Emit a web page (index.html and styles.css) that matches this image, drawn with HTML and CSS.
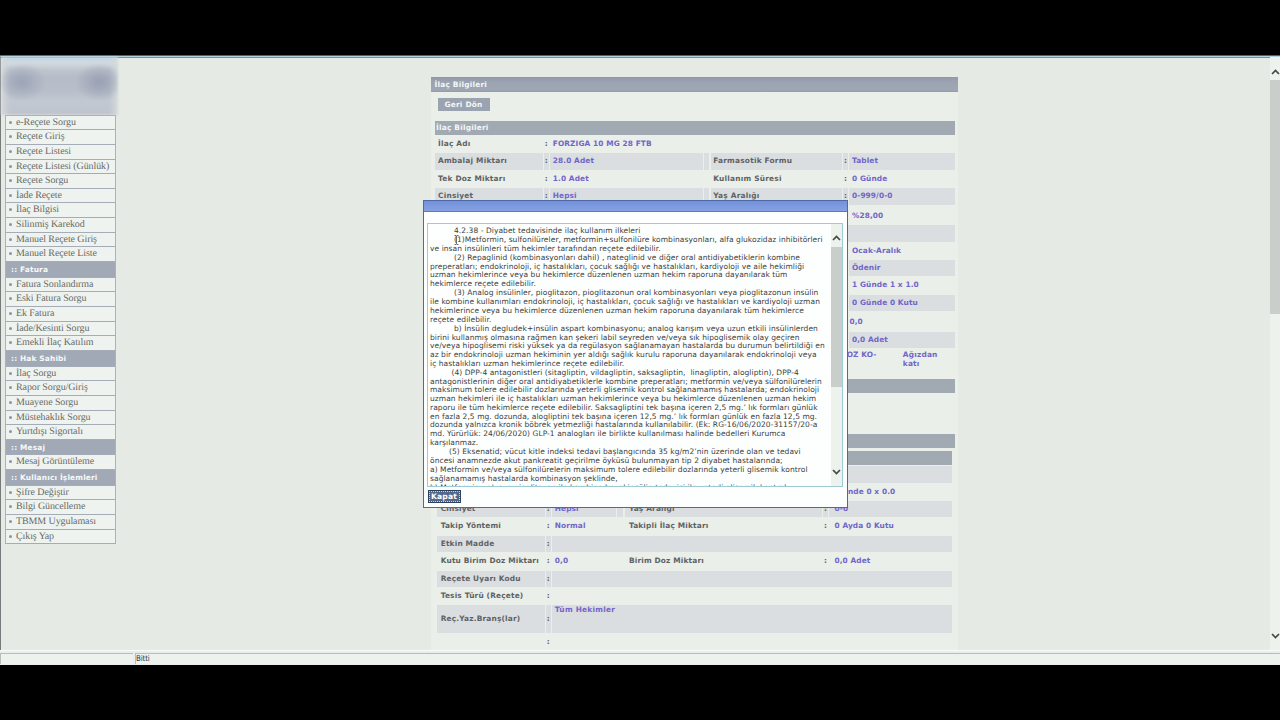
FILE: index.html
```html
<!DOCTYPE html>
<html lang="tr">
<head>
  <meta charset="UTF-8">
  <title>İlaç Bilgileri</title>
  <link rel="stylesheet" href="styles.css">
</head>
<body>

  <div class="window">
    <div class="main">
      <div class="sidebar">
        <div class="logo"></div>
        <ul class="menu">
          <li>e-Reçete Sorgu</li>
          <li>Reçete Giriş</li>
          <li>Reçete Listesi</li>
          <li>Reçete Listesi (Günlük)</li>
          <li>Reçete Sorgu</li>
          <li>İade Reçete</li>
          <li>İlaç Bilgisi</li>
          <li>Silinmiş Karekod</li>
          <li>Manuel Reçete Giriş</li>
          <li>Manuel Reçete Liste</li>
          <li class="head">:: Fatura</li>
          <li>Fatura Sonlandırma</li>
          <li>Eski Fatura Sorgu</li>
          <li>Ek Fatura</li>
          <li>İade/Kesinti Sorgu</li>
          <li>Emekli İlaç Katılım</li>
          <li class="head">:: Hak Sahibi</li>
          <li>İlaç Sorgu</li>
          <li>Rapor Sorgu/Giriş</li>
          <li>Muayene Sorgu</li>
          <li>Müstehaklık Sorgu</li>
          <li>Yurtdışı Sigortalı</li>
          <li class="head">:: Mesaj</li>
          <li>Mesaj Görüntüleme</li>
          <li class="head">:: Kullanıcı İşlemleri</li>
          <li>Şifre Değiştir</li>
          <li>Bilgi Güncelleme</li>
          <li>TBMM Uygulaması</li>
          <li>Çıkış Yap</li>
        </ul>
      </div>

      <div class="content">
        <div class="panel">
          <div class="panel-title">İlaç Bilgileri</div>
          <div class="toolbar"><span class="btn">Geri Dön</span></div>

          <div class="section-title">İlaç Bilgileri</div>
          <div class="info">
            <div class="row"><b>İlaç Adı</b><i>:</i><span>FORZIGA 10 MG 28 FTB</span></div>
            <div class="row odd pair"><b>Ambalaj Miktarı</b><i>:</i><span>28.0 Adet</span><b>Farmasotik Formu</b><i>:</i><span>Tablet</span></div>
            <div class="row"><b>Tek Doz Miktarı</b><i>:</i><span>1.0 Adet</span><b>Kullanım Süresi</b><i>:</i><span>0 Günde</span></div>
            <div class="row odd pair"><b>Cinsiyet</b><i>:</i><span>Hepsi</span><b>Yaş Aralığı</b><i>:</i><span>0-999/0-0</span></div>
            <div class="row tall"><b></b><i></i><span></span><b></b><i></i><span>%28,00</span></div>
            <div class="row odd wide"></div>
            <div class="row"><b></b><i></i><span></span><b></b><i></i><span>Ocak-Aralık</span></div>
            <div class="row odd pair"><b></b><i></i><span></span><b></b><i></i><span>Ödenir</span></div>
            <div class="row"><b></b><i></i><span></span><b></b><i></i><span>1 Günde 1 x 1.0</span></div>
            <div class="row odd pair"><b></b><i></i><span></span><b></b><i></i><span>0 Günde 0 Kutu</span></div>
            <div class="row tall"><b></b><i></i><span></span><b></b><i></i><span class="near">0,0</span></div>
            <div class="row odd pair"><b></b><i></i><span></span><b></b><i></i><span>0,0 Adet</span></div>
            <div class="substance"><span>DOZ KO-</span><span>Ağızdan<br>katı</span></div>
          </div>

          <div class="section-title"></div>
          <div class="space"></div>
          <div class="section-title"></div>

          <div class="info second">
            <div class="section-title"></div>
            <div class="row odd wide"></div>
            <div class="row"><b></b><i></i><span></span><b></b><i></i><span class="dose">0 Günde 0 x 0.0</span></div>
            <div class="row odd pair"><b>Cinsiyet</b><i>:</i><span>Hepsi</span><b>Yaş Aralığı</b><i>:</i><span>0-0</span></div>
            <div class="row"><b>Takip Yöntemi</b><i>:</i><span>Normal</span><b>Takipli İlaç Miktarı</b><i>:</i><span>0 Ayda 0 Kutu</span></div>
            <div class="row odd one"><b>Etkin Madde</b><i>:</i><span></span></div>
            <div class="row"><b>Kutu Birim Doz Miktarı</b><i>:</i><span>0,0</span><b>Birim Doz Miktarı</b><i>:</i><span>0,0 Adet</span></div>
            <div class="row odd one"><b>Reçete Uyarı Kodu</b><i>:</i><span></span></div>
            <div class="row one"><b>Tesis Türü (Reçete)</b><i>:</i><span></span></div>
            <div class="row odd one branch"><b>Reç.Yaz.Branş(lar)</b><i>:</i><span>Tüm Hekimler</span></div>
            <div class="row one"><b></b><i>:</i><span></span></div>
          </div>
        </div>
      </div>

      <div class="scrollbar page-scroll">
        <svg viewBox="0 0 9 6"><path d="M1 5 L4.5 1.5 L8 5"/></svg>
        <div class="thumb"></div>
        <svg viewBox="0 0 9 6"><path d="M1 1 L4.5 4.5 L8 1"/></svg>
      </div>
    </div>

    <div class="status">
      <div class="status-left"></div>
      <div class="status-text">Bitti</div>
    </div>
  </div>

  <div class="dialog">
    <div class="dialog-bar"></div>
    <div class="textbox">
      <div class="rules">
        <p class="in">4.2.38 - Diyabet tedavisinde ilaç kullanım ilkeleri</p>
        <p class="in">(1)Metformin, sulfonilüreler, metformin+sulfonilüre kombinasyonları, alfa glukozidaz inhibitörleri<br>ve insan insülinleri tüm hekimler tarafından reçete edilebilir.</p>
        <p class="in">(2) Repaglinid (kombinasyonları dahil) , nateglinid ve diğer oral antidiyabetiklerin kombine<br>preperatları; endokrinoloji, iç hastalıkları, çocuk sağlığı ve hastalıkları, kardiyoloji ve aile hekimliği<br>uzman hekimlerince veya bu hekimlerce düzenlenen uzman hekim raporuna dayanılarak tüm<br>hekimlerce reçete edilebilir.</p>
        <p class="in">(3) Analog insülinler, pioglitazon, pioglitazonun oral kombinasyonları veya pioglitazonun insülin<br>ile kombine kullanımları endokrinoloji, iç hastalıkları, çocuk sağlığı ve hastalıkları ve kardiyoloji uzman<br>hekimlerince veya bu hekimlerce düzenlenen uzman hekim raporuna dayanılarak tüm hekimlerce<br>reçete edilebilir.</p>
        <p class="in">b) İnsülin degludek+insülin aspart kombinasyonu; analog karışım veya uzun etkili insülinlerden<br>birini kullanmış olmasına rağmen kan şekeri labil seyreden ve/veya sık hipoglisemik olay geçiren<br>ve/veya hipoglisemi riski yüksek ya da regülasyon sağlanamayan hastalarda bu durumun belirtildiği en<br>az bir endokrinoloji uzman hekiminin yer aldığı sağlık kurulu raporuna dayanılarak endokrinoloji veya<br>iç hastalıkları uzman hekimlerince reçete edilebilir.</p>
        <p class="in4">(4) DPP-4 antagonistleri (sitagliptin, vildagliptin, saksagliptin,&nbsp; linagliptin, alogliptin), DPP-4<br>antagonistlerinin diğer oral antidiyabetiklerle kombine preperatları; metformin ve/veya sülfonilürelerin<br>maksimum tolere edilebilir dozlarında yeterli glisemik kontrol sağlanamamış hastalarda; endokrinoloji<br>uzman hekimleri ile iç hastalıkları uzman hekimlerince veya bu hekimlerce düzenlenen uzman hekim<br>raporu ile tüm hekimlerce reçete edilebilir. Saksagliptini tek başına içeren 2,5 mg.’ lık formları günlük<br>en fazla 2,5 mg. dozunda, alogliptini tek başına içeren 12,5 mg.’ lık formları günlük en fazla 12,5 mg.<br>dozunda yalnızca kronik böbrek yetmezliği hastalarında kullanılabilir. (Ek: RG-16/06/2020-31157/20-a<br>md. Yürürlük: 24/06/2020) GLP-1 analogları ile birlikte kullanılması halinde bedelleri Kurumca<br>karşılanmaz.</p>
        <p class="in5">(5) Eksenatid; vücut kitle indeksi tedavi başlangıcında 35 kg/m2’nin üzerinde olan ve tedavi<br>öncesi anamnezde akut pankreatit geçirilme öyküsü bulunmayan tip 2 diyabet hastalarında;</p>
        <p>a) Metformin ve/veya sülfonilürelerin maksimum tolere edilebilir dozlarında yeterli glisemik kontrol<br>sağlanamamış hastalarda kombinasyon şeklinde,</p>
        <p>b) Metformin ve/veya pioglitazon ile kombine bazal insülin tedavisi ile yeterli glisemik kontrol</p>
      </div>
      <div class="scrollbar box-scroll">
        <svg viewBox="0 0 9 6"><path d="M1 5 L4.5 1.5 L8 5"/></svg>
        <div class="thumb"></div>
        <svg viewBox="0 0 9 6"><path d="M1 1 L4.5 4.5 L8 1"/></svg>
      </div>
    </div>
    <span class="close">Kapat</span>
    <svg class="caret" viewBox="0 0 5 10"><path d="M0.5 0.5 H2 L2.5 1 L3 0.5 H4.5 M2.5 1 V9 M0.5 9.5 H2 L2.5 9 L3 9.5 H4.5"/></svg>
  </div>

</body>
</html>
```
FILE: styles.css
```css
* {
  box-sizing: border-box;
}

body {
  margin: 0;
  height: 720px;
  padding: 55px 0;
  background: #000;
  overflow: hidden;
  font-family: "DejaVu Sans", Verdana, sans-serif;
  text-rendering: geometricPrecision;
}

.window {
  height: 610px;
  display: flex;
  flex-direction: column;
  background: #e5eae4;
  border-top: 1px solid #3d6686;
}

.main {
  flex: 1;
  min-height: 0;
  display: flex;
  border-top: 1px solid #b5d2e3;
  border-left: 1.5px solid #777a7b;
  box-shadow: inset 0 1px #6c92ad;
}

/* left menu */
.sidebar {
  width: 115px;
  padding-left: 3.5px;
}

.logo {
  width: 117px;
  height: 57.6px;
  margin-left: -4px;
  background:
    radial-gradient(ellipse 24px 19px at 21px 25px, #9ca4b6, #a0a8b900),
    radial-gradient(ellipse 24px 19px at 98px 25px, #98a0b3, #9ca4b600),
    linear-gradient(90deg, #d5dadb, #d5dadb00 9px 108px, #d5dadb),
    linear-gradient(#bdd3e4, #d3dbe0 6px, #bfc5ce 13px, #b6bdc8 20px, #b8bfca 34px, #c3c8d1 44px, #bec4ce);
  filter: blur(1.2px);
}

.menu {
  position: relative;
  margin: 0;
  padding: 0;
  width: 111.5px;
  list-style: none;
  border: 1px solid #abb2bd;
  border-width: 1px 1px 0;
  background: #eff3ef;
}

.menu li {
  height: 14.65px;
  display: flex;
  align-items: center;
  padding-bottom: 0.6px;
  border-bottom: 1px solid #a4acb8;
  font: 10px "Liberation Serif", serif;
  letter-spacing: -0.1px;
  color: #686b68;
  white-space: nowrap;
}

.menu li::before {
  content: "";
  width: 3px;
  height: 3px;
  margin: 0 4.5px 0 3px;
  border-radius: 50%;
  background: #8b94a0;
}

.menu .head {
  height: 15.7px;
  padding: 1px 0 0 5.5px;
  background: #a0a9b5;
  font: bold 7.4px "DejaVu Sans", sans-serif;
  letter-spacing: 0.17px;
  color: #f7faf9;
}

.menu .head::before {
  display: none;
}

/* page content */
.content {
  flex: 1;
  padding: 20px 0 0 314.5px;
  overflow: hidden;
}

.panel {
  width: 527px;
  height: 600px;
  background: #eaefe9;
  font-size: 7.4px;
  font-weight: bold;
  letter-spacing: 0.1px;
}

.panel-title {
  height: 15px;
  padding-left: 4px;
  line-height: 16px;
  letter-spacing: 0.22px;
  color: #f4f7f6;
  background: linear-gradient(#9199a9, #9ba3b2 30%, #9fa7b4 88%, #929aa8);
}

.toolbar {
  height: 29px;
  padding: 6px 7px;
}

.btn {
  display: block;
  width: 52px;
  height: 13px;
  line-height: 13.5px;
  letter-spacing: 0.22px;
  text-align: center;
  color: #f4f7f6;
  background: #9ba3b1;
}

.section-title {
  height: 14px;
  width: 520px;
  margin-left: 4px;
  padding-left: 1.5px;
  line-height: 14.6px;
  letter-spacing: 0.22px;
  color: #f4f7f6;
  background: #a1a9b3;
}

.info {
  width: 520px;
  margin-left: 4px;
}

.row {
  height: 17.4px;
  display: grid;
  grid-template-columns: 108px 5px 153px 5px 131px 5px 1fr;
  column-gap: 1.3px;
  padding-top: 1px;
  line-height: 16.2px;
  white-space: nowrap;
}

.row b {
  padding-left: 3.5px;
  letter-spacing: 0.22px;
  color: #5f6264;
}

.row b:nth-of-type(2) {
  grid-column: 5;
  padding-left: 2.5px;
}

.row i {
  font-style: normal;
  text-align: center;
  color: #5f6264;
}

.row span {
  padding-left: 2.7px;
  color: #7165ca;
}

.row.odd > *,
.row.pair::after,
.row.wide::before {
  background: #dadee0;
}

.row.wide::before {
  content: "";
  grid-column: 1 / -1;
}

.row.pair::after {
  content: "";
  grid-area: 1 / 4;
}

.row.tall {
  height: 19.7px;
  line-height: 19.6px;
}

.near {
  margin-left: -2.5px;
}

.substance {
  height: 31px;
  display: flex;
  padding: 3.2px 0 0 406px;
  line-height: 8.7px;
  color: #7165ca;
}

.substance span {
  flex: none;
  width: 62px;
}

.substance span:first-child {
  width: 56px;
}

.space {
  height: 41px;
}

.substance span:last-child {
  width: 50px;
  margin-left: 6.3px;
  letter-spacing: 0.2px;
}

.second {
  width: 515px;
  margin: 3px 0 0 6px;
}

.second .section-title {
  width: 515px;
  margin: 0;
}

.second .row {
  grid-template-columns: 108px 5px 64px 6px 197px 5px 1fr;
}

.second .row.one {
  grid-template-columns: 108px 5px 1fr;
}

.second .row b:first-child {
  padding-left: 4.2px;
}

.second .row b {
  letter-spacing: 0.17px;
}

.second .row b:nth-of-type(2) {
  padding-left: 4.2px;
}

.second .row span:last-child {
  padding-left: 5.2px;
}

.second .row.one span {
  padding-left: 2.7px;
  letter-spacing: 0.25px;
}

.second .row.branch {
  height: 28.7px;
  line-height: 27.6px;
}

.second .branch span {
  line-height: 10.5px;
}

.second .dose {
  margin-left: -6px;
}

/* scrollbars */
.scrollbar {
  display: flex;
  flex-direction: column;
  align-items: center;
  background: #edf2ed;
}

.scrollbar svg {
  width: 9px;
  height: 6px;
  flex: none;
  fill: none;
  stroke: #454846;
  stroke-width: 1.7;
}

.scrollbar .thumb {
  width: 100%;
  margin-bottom: auto;
  background: #caceca;
}

.page-scroll {
  width: 10px;
  padding: 12px 0 11px;
}

.page-scroll .thumb {
  height: 234px;
  margin-top: 5px;
}

/* status bar */
.status {
  height: 15px;
  display: flex;
  gap: 2px;
  padding: 2px 0 1px;
  border-top: 1px solid #f8fbf8;
  background: #e9eeea;
}

.status-left {
  width: 133px;
}

.status-text {
  flex: 1;
  font: 8px/10px "DejaVu Sans Condensed", "DejaVu Sans", sans-serif;
  letter-spacing: -0.2px;
  color: #333;
}

.status-left,
.status-text {
  background: #eef2ee;
  border: 1px solid #b9bdb9;
  border-width: 1px 0 0 1px;
}

/* dialog over the page */
.dialog {
  position: absolute;
  left: 423px;
  top: 200px;
  width: 425px;
  height: 308px;
  background: #fdfffe;
  border: 1.5px solid #4c69a5;
}

.dialog-bar {
  height: 11px;
  background: linear-gradient(#7391da, #86a2e3);
  border-bottom: 1px solid #6078b9;
}

.textbox {
  display: flex;
  height: 263.5px;
  margin: 11px 4px 0 3px;
  border: 1px solid #9fcad3;
}

.rules {
  flex: 1;
  min-width: 0;
  height: 261.5px;
  padding: 2.6px 0 0 2px;
  overflow: hidden;
  font-size: 7.5px;
  line-height: 8.7px;
  letter-spacing: 0.065px;
  color: #3a3d3c;
  white-space: nowrap;
}

.rules p {
  margin: 0 0 0.65px;
}

.rules .in {
  text-indent: 24px;
}

.rules .in4 {
  text-indent: 21.5px;
}

.rules .in5 {
  text-indent: 19px;
}

.box-scroll {
  width: 11px;
  padding: 11px 0;
}

.box-scroll .thumb {
  height: 140px;
  margin-top: 6px;
}

.close {
  display: block;
  width: 33px;
  height: 13px;
  margin: 3px 0 0 3.5px;
  line-height: 11px;
  text-align: center;
  font-size: 7.6px;
  letter-spacing: 0.15px;
  font-weight: bold;
  color: #fff;
  background: #52688d;
  border: 1px solid #2c405f;
  outline: 1px dotted #c9d3e3;
  outline-offset: -2px;
}

.caret {
  position: absolute;
  left: 29.5px;
  top: 34px;
  width: 5px;
  height: 10px;
  fill: none;
  stroke: #333;
  stroke-width: 0.7;
}
```
